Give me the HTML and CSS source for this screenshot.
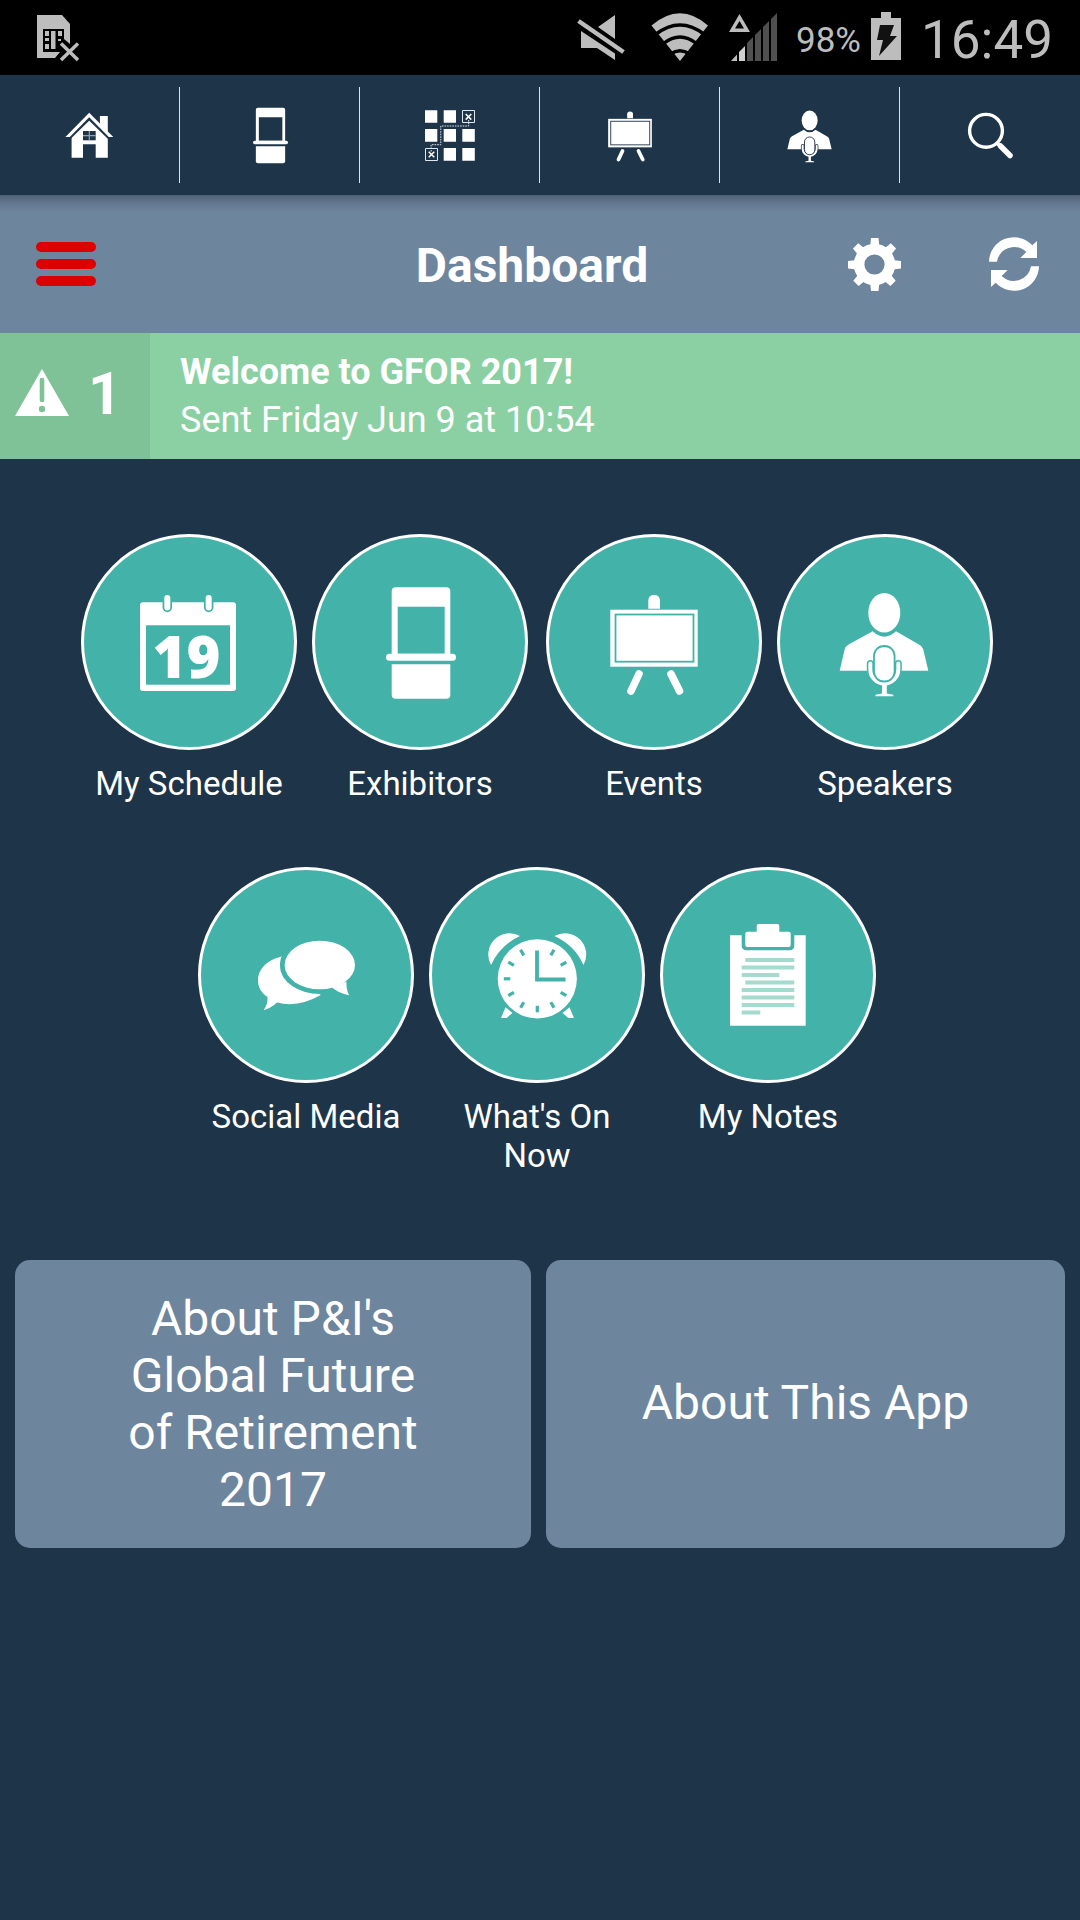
FILE: index.html
```html
<!doctype html>
<html lang="en">
<head>
<meta charset="utf-8">
<title>Dashboard</title>
<link rel="stylesheet" href="styles.css">
</head>

<body>
<!-- icons used both in the nav and in the circles, currentColor is the colour behind them -->
<svg class="sprite" width="0" height="0">
    <symbol id="booth" viewBox="0 0 120 120">
        <path fill="#fff" fill-rule="evenodd" d="M35.7 5.3h50.6a4 4 0 0 1 4 4v64H31.7v-64a4 4 0 0 1 4-4zM37.7 24.7v47h47v-47z"/>
        <rect fill="#fff" x="26" y="71.7" width="70" height="7" rx="3.5"/>
        <path fill="#fff" d="M31.7 82.3h58.6v30.4a4 4 0 0 1-4 4H35.7a4 4 0 0 1-4-4z"/>
    </symbol>
    <symbol id="easel" viewBox="0 0 120 120">
        <path fill="#fff" d="M54.3 26.7v-8q0-5.7 5.8-5.7t5.9 5.7v8z"/>
        <rect fill="#fff" x="16.3" y="27.7" width="87.4" height="57"/>
        <rect fill="none" stroke="currentColor" stroke-width="1.8" x="21.5" y="32.5" width="78" height="47.2"/>
        <path fill="none" stroke="#fff" stroke-width="7.5" stroke-linecap="round" d="M45 92L37 109M77 92L85.5 109"/>
    </symbol>
    <symbol id="speaker" viewBox="0 0 120 120">
        <path fill="#fff" d="M47.7 49.3q11.6 10.8 23.3 0l22.5 13q3.7 1.5 4.7 5l5.1 21.4H14.7l5-21.4q.8-3 4.3-5z"/>
        <ellipse fill="#fff" cx="59.3" cy="30.8" rx="16" ry="19.8"/>
        <path fill="none" stroke="currentColor" stroke-width="7" stroke-linecap="round" d="M45.3 81.5v6a14 14 0 0 0 28 0v-6"/>
        <path fill="none" stroke="#fff" stroke-width="4" stroke-linecap="round" d="M45.3 81.5v6a14 14 0 0 0 28 0v-6"/>
        <rect fill="#fff" stroke="currentColor" stroke-width="1.8" x="49" y="64" width="20.6" height="35.5" rx="10"/>
        <path fill="#fff" d="M57 102h4.8v9.5l6.5 1.3v1.5H50.5v-1.5l6.5-1.3z"/>
    </symbol>
</svg>

<div class="status">
    <svg width="43" height="75" viewBox="37 0 43 75">
        <path fill="#bdbdbd" d="M37 15h25l8 9v34H37z"/>
        <path fill="#000" d="M43 29h21v23H43zM64 39l6 5v14H55l5-6z"/>
        <path fill="#bdbdbd" d="M45 31h4v5h-4zM45 38h4v3h-4zM45 44h4v5h-4zM51 31h4.5v18H51zM58 31h4v5h-4zM58 39h3v2h-3z"/>
        <path stroke="#000" stroke-width="7" d="M61 43l17 17M78 43L61 60"/>
        <path stroke="#bdbdbd" stroke-width="3.5" d="M61 43.5l17 16.5M78 43.5L61 60"/>
    </svg>
    <svg class="mute" width="49" height="75" viewBox="576 0 49 75">
        <path fill="#bdbdbd" d="M581 31l34 22.500V60l-18-12h-16zM615 15v24l-17-12z"/>
        <path stroke="#000" stroke-width="9" d="M581 23l42 29"/>
        <path stroke="#bdbdbd" stroke-width="4.5" d="M578.5 21l45 31"/>
    </svg>
    <svg class="wifi" width="58" height="75" viewBox="650.5 0 58 75">
        <path fill="#bdbdbd" d="M679.5 61l-28.5-35.5q28.5-24.5 56.5 0z"/>
        <g fill="none" stroke="#000" stroke-width="3.5">
            <path d="M655 34.5q24.5-19 49 0M663 43.5q16.500-13 33 0M670 54q9.500-6.500 19 0"/>
        </g>
    </svg>
    <svg class="signal" width="49" height="75" viewBox="729 0 49 75">
        <path fill="#bdbdbd" fill-rule="evenodd" d="M739.5 14L750 32h-21zM739.5 21l-4.5 7.5h9z"/>
        <path fill="#bdbdbd" d="M731 61l6-6.5V61z"/>
        <path fill="#d0d0d0" d="M739 61v-9l6-6v15z"/>
        <path fill="#505050" d="M747 61V43l6-6v24zM755 61V35l6-6v32zM763 61V27l6-6v40zM771 61V19l6-6v48z"/>
    </svg>
    <span class="percent">98%</span>
    <svg class="battery" width="30" height="75" viewBox="871 0 30 75">
        <path fill="#bdbdbd" d="M871 18h10v-6h10v6h10v42h-30z"/>
        <path fill="#111" d="M880 25h14l-4 11h7l-18 20 4-16h-6z"/>
    </svg>
    <span class="time">16:49</span>
</div>

<div class="nav">
    <a>
        <svg width="60" height="60" viewBox="0 0 60 60">
            <path fill="#fff" d="M39.9 11h7.9v16l-7.9-7zM29.2 14.3l18.6 17.5v20.9H35.7V39.3H23v13.4H11.6V31.8z"/>
            <path fill="#1e3448" d="M23 26h12.7v9.300H23z"/>
            <path fill="none" stroke="#8ba3b5" stroke-width="1.2" d="M29.3 26v9.300M23 30.6h12.7"/>
            <path fill="none" stroke="#1e3448" stroke-width="2" d="M9 34L29.2 14.2 49.5 34"/>
            <path fill="#fff" d="M5.4 31.9L29.2 7.7l24.1 24.2h-4.5L29.2 12.3 9.8 31.9z"/>
        </svg>
    </a>
    <a><svg width="60" height="60"><use href="#booth"/></svg></a>
    <a>
        <svg width="60" height="60" viewBox="0 0 60 60">
            <path fill="#fff" d="M5 5.3h12.3v12.4H5zM23.7 5.3H36v12.4H23.7zM5 24h12.3v12.7H5zM23.7 24H36v12.7H23.7zM42.3 24h12.5v12.7H42.3zM23.7 43H36v12.7H23.7zM42.3 43h12.5v12.7H42.3z"/>
            <path fill="none" stroke="#dfe8ee" d="M42.5 5.5h12v12h-12zM5.5 43.5h12v12h-12z"/>
            <path fill="none" stroke="#fff" stroke-width="1.5" d="M45.7 9l5.6 5.6M51.3 9l-5.6 5.6M8.7 46.7l5.6 5.6M14.3 46.7l-5.6 5.6"/>
            <path fill="none" stroke="#dfe8ee" stroke-dasharray="1.6 1" d="M48.7 15v6H20.8v18.7h-9.7V47"/>
        </svg>
    </a>
    <a><svg width="60" height="60"><use href="#easel"/></svg></a>
    <a><svg width="60" height="60"><use href="#speaker"/></svg></a>
    <a>
        <svg width="60" height="60" viewBox="0 0 60 60">
            <circle cx="26" cy="25.8" r="16.4" fill="none" stroke="#fff" stroke-width="3.4"/>
            <path stroke="#fff" stroke-width="3.5" d="M37 38l4 4"/>
            <path stroke="#fff" stroke-width="5.5" stroke-linecap="round" d="M40.5 41l9.500 9.500"/>
        </svg>
    </a>
</div>

<div class="header">
    <div class="menu"><i></i><i></i><i></i></div>
    <h1>Dashboard</h1>
    <svg class="gear" width="53" height="53" viewBox="0 0 53 53">
        <circle cx="26.5" cy="26.5" r="15.4" fill="none" stroke="#fff" stroke-width="10.6"/>
        <g fill="#fff">
            <path id="tooth" d="M20 9l2.300-2L23 0h7.500l.7 7 2.300 2zM20 44l2.300 2 .7 7h7.500l.7-7 2.300-2z"/>
            <use href="#tooth" transform="rotate(45 26.5 26.5)"/>
            <use href="#tooth" transform="rotate(90 26.5 26.5)"/>
            <use href="#tooth" transform="rotate(135 26.5 26.5)"/>
        </g>
    </svg>
    <svg class="refresh" width="50" height="50" viewBox="0 0 50 50">
        <path id="arrow" fill="#fff" d="M0 22.7A25 25 0 0 1 43.3 6.200L48 2v17H31.3l6-6A17.500 17.500 0 0 0 8 22.7z"/>
        <use href="#arrow" transform="rotate(180 25 25)"/>
    </svg>
</div>

<div class="alert">
    <div class="count">
        <svg width="54" height="47" viewBox="0 0 54 47">
            <path fill="#fff" d="M27 0l27 47H0z"/>
            <path stroke="#80c298" stroke-width="4.6" stroke-linecap="round" d="M27 11v20"/>
            <circle cx="27" cy="40" r="3.2" fill="#80c298"/>
        </svg>
        <b>1</b>
    </div>
    <div class="message">
        <b>Welcome to GFOR 2017!</b>
        <p>Sent Friday Jun 9 at 10:54</p>
    </div>
</div>

<div class="buttons">
    <div class="row">
        <div class="item">
            <div class="circle">
                <svg width="120" height="120" viewBox="0 0 120 120">
                    <path fill="#fff" fill-rule="evenodd" d="M14 20.300h90a3 3 0 0 1 3 3V106a3 3 0 0 1-3 3H14a3 3 0 0 1-3-3V23.300a3 3 0 0 1 3-3zM17 43.300v59.400h84V43.300z"/>
                    <path fill="none" stroke="currentColor" stroke-width="9.5" stroke-linecap="round" d="M38.3 19v6.500M79.7 19v6.500"/>
                    <path fill="none" stroke="#fff" stroke-width="6" stroke-linecap="round" d="M38.3 16v9.500M79.7 16v9.500"/>
                    <text x="57.500" y="95.500" class="day">19</text>
                </svg>
            </div>
            <span>My Schedule</span>
        </div>
        <div class="item">
            <div class="circle"><svg width="120" height="120"><use href="#booth"/></svg></div>
            <span>Exhibitors</span>
        </div>
        <div class="item wide">
            <div class="circle"><svg width="120" height="120"><use href="#easel"/></svg></div>
            <span>Events</span>
        </div>
        <div class="item">
            <div class="circle"><svg width="120" height="120"><use href="#speaker"/></svg></div>
            <span>Speakers</span>
        </div>
    </div>
    <div class="row second">
        <div class="item">
            <div class="circle">
                <svg width="120" height="120" viewBox="0 0 120 120">
                    <path fill="#fff" d="M46 40.500c-20 0-34 11-34 25 0 7 3.500 12.500 9.500 16.500q.5 7-3.800 13.300Q26 92.500 31 87.500q21 5.500 43.700-7.500z"/>
                    <ellipse cx="73.8" cy="50" rx="35.2" ry="24.3" fill="#fff" stroke="currentColor" stroke-width="9.5"/>
                    <path fill="#fff" d="M86 72.500q7 6 17 7.700-3-6.500-2.500-13.500z"/>
                    <ellipse cx="73.8" cy="50" rx="35.2" ry="24.3" fill="#fff"/>
                </svg>
            </div>
            <span>Social Media</span>
        </div>
        <div class="item">
            <div class="circle">
                <svg width="120" height="120" viewBox="0 0 120 120">
                    <path fill="#fff" d="M43 21A21.300 21.300 0 0 0 14 50Q23 30 43 21zM77.500 21a21.300 21.300 0 0 1 29 29Q97.500 30 77.500 21zM28.500 92.300L24 103h5.700l5.700-5zM92.500 92.300L97 103h-5.700l-5.700-5z"/>
                    <circle cx="60.3" cy="63.8" r="39.6" fill="#fff"/>
                    <path fill="none" stroke="currentColor" stroke-width="3.8" d="M60 35.500v29h28.500"/>
                    <g stroke="currentColor" stroke-width="3.2">
                        <path id="tick" d="M60.3 90.800v6.500"/>
                        <use href="#tick" transform="rotate(30 60.3 63.8)"/>
                        <use href="#tick" transform="rotate(60 60.3 63.8)"/>
                        <use href="#tick" transform="rotate(90 60.3 63.8)"/>
                        <use href="#tick" transform="rotate(120 60.3 63.8)"/>
                        <use href="#tick" transform="rotate(150 60.3 63.8)"/>
                        <use href="#tick" transform="rotate(210 60.3 63.8)"/>
                        <use href="#tick" transform="rotate(240 60.3 63.8)"/>
                        <use href="#tick" transform="rotate(300 60.3 63.8)"/>
                        <use href="#tick" transform="rotate(330 60.3 63.8)"/>
                    </g>
                </svg>
            </div>
            <span>What's On Now</span>
        </div>
        <div class="item">
            <div class="circle">
                <svg width="120" height="120" viewBox="0 0 120 120">
                    <path fill="#fff" d="M22 20.300h11.700V31a4.300 4.300 0 0 0 4.300 4.300h44a4.300 4.300 0 0 0 4.300-4.300V20.300h11.400v90.400H22z"/>
                    <path fill="#fff" d="M39.300 16.700h9.400V11a2 2 0 0 1 2-2h18.600a2 2 0 0 1 2 2v5.700h9.400a2 2 0 0 1 2 2V30a2 2 0 0 1-2 2H39.300a2 2 0 0 1-2-2V18.700a2 2 0 0 1 2-2z"/>
                    <path stroke="#a5dacf" stroke-width="4" d="M37.300 45h49M33.700 52.500h52.600M33.700 60h37.600M37.300 67.500h49M33.700 75h52.600M33.700 82.500h52.600M33.700 90h52.600M33.700 97.500h18.600"/>
                </svg>
            </div>
            <span>My Notes</span>
        </div>
    </div>
</div>

<div class="about">
    <a><span>About P&amp;I's Global Future of Retirement 2017</span></a>
    <a><span>About This App</span></a>
</div>
</body>
</html>
```
FILE: styles.css
```css
* {
    box-sizing: border-box;
    margin: 0;
    padding: 0;
}
body {
    width: 1080px;
    min-height: 1920px;
    background: #1e3448;
    color: #fff;
    font-family: Roboto, sans-serif;
}
svg {
    display: block;
    flex-shrink: 0;
    overflow: visible;
}
.sprite {
    position: absolute;
}

/* status bar */
.status {
    display: flex;
    height: 75px;
    padding-left: 37px;
    background: #000;
    color: #bdbdbd;
    line-height: 75px;
    white-space: nowrap;
}
.mute {
    margin-left: 496px;
}
.wifi {
    margin-left: 25.5px;
}
.signal {
    margin-left: 20.5px;
}
.percent {
    width: 75px;
    margin-left: 18px;
    padding-top: 3px;
    font-size: 35px;
}
.time {
    margin-left: 20px;
    padding-top: 3px;
    font-size: 53px;
}

/* top navigation */
.nav {
    display: flex;
    height: 120px;
    padding: 12px 0;
    color: #1e3448;
}
.nav a {
    display: flex;
    width: 180px;
    align-items: center;
    justify-content: center;
    border-right: 1px solid #dce4ea;
}
.nav a:last-child {
    border-right: none;
}

/* title bar */
.header {
    display: grid;
    grid-template-columns: 259px 1fr 141px 135px;
    align-items: center;
    height: 138px;
    background: linear-gradient(#506177, #647991 9px, #6e859e 18px);
}
.menu {
    display: flex;
    flex-direction: column;
    gap: 7px;
    margin-left: 36px;
}
.menu i {
    width: 60px;
    height: 10px;
    border-radius: 5px;
    background: #d00;
}
.header h1 {
    padding: 3px 0 0 1px;
    font-size: 48px;
    line-height: 57px;
    text-align: center;
}
.gear {
    justify-self: center;
}
.refresh {
    margin-left: 44px;
}

/* alert */
.alert {
    display: flex;
    height: 126px;
    background: #8ad0a3;
}
.count {
    display: flex;
    align-items: center;
    width: 150px;
    padding-left: 15px;
    background: #80c298;
    font-size: 59px;
    line-height: 70px;
}
.count svg {
    margin-bottom: 7px;
}
.count b {
    margin: 0 0 4px 19px;
}
.message {
    padding: 15px 30px;
    font-size: 36px;
    line-height: 48px;
}

/* round buttons */
.buttons {
    padding-top: 75px;
}
.row {
    display: flex;
    gap: 15px;
    padding-left: 81px;
}
.second {
    margin-top: 64px;
    padding-left: 198px;
}
.item {
    width: 216px;
    text-align: center;
}
.wide {
    margin-left: 3px;
}
.circle {
    display: flex;
    align-items: center;
    justify-content: center;
    height: 216px;
    border: 3px solid #fff;
    border-radius: 50%;
    background: #43b3aa;
    color: #43b3aa;
}
.item span {
    display: block;
    padding: 14px 12px 0;
    font-size: 33px;
    line-height: 39px;
}
.day {
    fill: #fff;
    font: 800 58px "Open Sans", sans-serif;
    text-anchor: middle;
}

/* about boxes */
.about {
    display: grid;
    grid-template-columns: 516px 519px;
    gap: 15px;
    margin-top: 85px;
    padding: 0 15px;
}
.about a {
    display: flex;
    align-items: center;
    justify-content: center;
    height: 288px;
    border-radius: 15px;
    background: #6e859e;
    font-size: 48px;
    line-height: 57px;
    text-align: center;
}
.about a:last-child {
    padding-bottom: 3px;
}
.about span {
    max-width: 330px;
}
```
